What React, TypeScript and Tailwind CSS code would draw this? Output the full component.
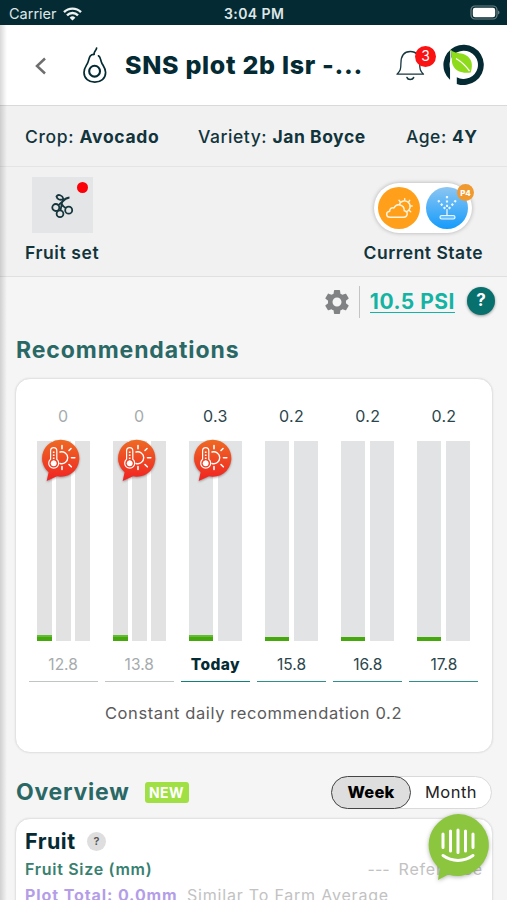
type Day = {
    value: string;
    label: string;
    past?: boolean;
    today?: boolean;
    alert?: boolean;
    bars: number;
};

const days: Day[] = [
    { value: "0", label: "12.8", past: true, alert: true, bars: 3 },
    { value: "0", label: "13.8", past: true, alert: true, bars: 3 },
    { value: "0.3", label: "Today", today: true, alert: true, bars: 2 },
    { value: "0.2", label: "15.8", bars: 2 },
    { value: "0.2", label: "16.8", bars: 2 },
    { value: "0.2", label: "17.8", bars: 2 },
];

const StatusBar = () => (
    <div className="relative flex h-[25px] shrink-0 items-center justify-between bg-[#042b33] pl-[9px] pr-[7px] text-[#dfe6e7]">
        <div className="flex items-center gap-[6px] pt-[3px]">
            <span className="text-[14.5px] leading-none">Carrier</span>
            <svg width="19" height="14" viewBox="0 0 19 14" fill="none" stroke="#eef2f2" strokeWidth="2.4">
                <path d="M1 5.2a12 12 0 0 1 17 0" />
                <path d="M4 8.3a7.8 7.8 0 0 1 11 0" />
                <path d="M9.5 13.6 6.6 10.7a4.1 4.1 0 0 1 5.8 0z" fill="#eef2f2" stroke="none" />
            </svg>
        </div>
        <span className="absolute left-[224px] top-[7px] whitespace-nowrap text-[14px] font-semibold leading-none tracking-[0.4px]">
            3:04 PM
        </span>
        <svg className="mt-[1px]" width="30" height="16" viewBox="0 0 30 16">
            <rect x="1" y="1" width="26" height="13" rx="4" fill="none" stroke="#6d8084" strokeWidth="1.2" />
            <rect x="2.8" y="2.8" width="22.4" height="9.4" rx="2.2" fill="#fff" />
            <path d="M28 5.5c2 .7 2 3.3 0 4z" fill="#6d8084" />
        </svg>
    </div>
);

const AvocadoIcon = () => (
    <svg width="26" height="38" viewBox="0 0 26 38" fill="none" stroke="#042b33" strokeWidth="1.7" strokeLinecap="round">
        <path d="M14.600 2C14.400 4.600 12.200 4.600 12 8.300" />
        <path d="M12 8.300C6.500 8.500 7.600 13.500 5.400 17.500C3.600 20.500 2 22.500 2 26.500C2 32.500 7 36.200 12.800 36.200C18.800 36.200 23.600 32.500 23.600 26.500C23.600 22.500 21.700 20.500 20 17.500C18.300 14.300 19 11.500 16.500 9.800" />
        <circle cx="12.6" cy="25.200" r="5.400" strokeWidth="2.100" />
    </svg>
);

const BellIcon = () => (
    <svg width="29" height="31" viewBox="0 0 29 31" fill="none" stroke="#17373e" strokeWidth="1.3" strokeLinecap="round" strokeLinejoin="round">
        <path d="M1 24.200h26.500c-3.400-3.200-3.800-5-3.800-10.700C23.700 6 20.600 1.500 14.300 1.500S4.900 6 4.900 13.500C4.900 19.200 4.400 21 1 24.200z" />
        <path d="M11 27.600c.8 2.600 5.600 2.600 6.600 0" strokeWidth="1.6" />
    </svg>
);

const BrandLogo = () => (
    <svg width="42" height="42" viewBox="0 0 42 42">
        <path
            fill="#042b33"
            d="M7.200 36A20.200 20.200 0 1 1 13.800 39.900V33.200A14.200 14.200 0 1 0 7.200 25z"
        />
        <path fill="#fff" d="M7.200 6.500h1.300V37H7.200z" />
        <path fill="#8edb1c" d="M7.400 5.800C11.500 9.800 17 8.300 22.500 11c6 3.200 8 9.300 5.200 17.500-8.500 1-15-1-17.700-7C7.800 16.800 9.800 12 7.400 5.800z" />
        <path d="M13 14.500c5 3 9.500 7 13.500 12.500" fill="none" stroke="#fff" strokeWidth="1.300" />
    </svg>
);

const Header = () => (
    <header className="flex h-[81px] shrink-0 items-center border-b border-[#d9d9d9] bg-white pl-[35px]">
        <svg className="mt-[2px]" width="12" height="18" viewBox="0 0 12 18" fill="none" stroke="#6e6e6e" strokeWidth="2.500">
            <path d="M10 1.500 2 9l8 7.500" />
        </svg>
        <div className="ml-[35px]">
            <AvocadoIcon />
        </div>
        <h1 className="ml-[17px] w-[271px] whitespace-nowrap text-[25px] font-extrabold leading-none tracking-[0.7px] text-[#042b33]">
            SNS plot 2b lsr -...
        </h1>
        <div className="relative">
            <BellIcon />
            <span className="absolute left-[19px] top-[-4px] flex h-[21px] w-[21px] items-center justify-center rounded-full bg-[#fb1212] text-[14px] leading-none text-white">
                3
            </span>
        </div>
        <div className="ml-[18px]">
            <BrandLogo />
        </div>
    </header>
);

const FruitSetIcon = () => (
    <svg width="23" height="25" viewBox="0 0 23 25" fill="none" stroke="#16363d" strokeWidth="1.800">
        <circle cx="4.800" cy="14.500" r="3.500" />
        <circle cx="9" cy="20.700" r="3.400" />
        <circle cx="17.700" cy="17.200" r="3.500" />
        <path d="M5.500 3.500C7 .8 11.500 2 12.400 6 9 7.600 6.300 6.600 5.500 3.500zM18.500 4.500c-3 .3-5 1.500-7 4.200-1 2-1.200 5-2 8.500M11 11.500c1 1.800 2.400 3 4 3.600M7.500 12.200 12 8" />
    </svg>
);

const WeatherIcon = () => (
    <svg width="42" height="42" viewBox="0 0 42 42" fill="none" stroke="#fff4dd" strokeWidth="1.400" strokeLinecap="round" strokeLinejoin="round">
        <circle cx="21" cy="21" r="21" fill="#ff9f1a" stroke="none" />
        <path d="M12 30.200h13.500c4.600 0 5-6 .7-6.500.4-6-7.600-8.200-10.200-2.700-2.500-.8-4.500.8-4.300 3.200-4.300.4-3.900 6 .3 6z" />
        <path d="M21.300 17.600a5.600 5.600 0 1 1 6.800 7.300" />
        <path d="M26.700 11.600v1.700M31.700 13.300l-1 1.600M34.200 19h-1.700M32.700 24.700l-1.400-1.200M21 13.300l1.200 1.500" />
    </svg>
);

const SprinklerIcon = () => (
    <svg width="42" height="42" viewBox="0 0 42 42" fill="none" stroke="#eaf6ff">
        <defs>
            <linearGradient id="water" x1="0" y1="0" x2="0" y2="1">
                <stop offset="0" stopColor="#8cc6f2" />
                <stop offset="1" stopColor="#149bfb" />
            </linearGradient>
        </defs>
        <circle cx="21" cy="21" r="21" fill="url(#water)" stroke="none" />
        <path d="M21 9v12.500M19.200 21.800l-8-9.500M22.800 21.800l8-9.500" strokeWidth="2.200" strokeDasharray="2.200 2.200" />
        <path d="M21 22v6.500" strokeWidth="1.300" />
        <rect x="14" y="28.500" width="15" height="3.500" rx="1.700" fill="#6cc0fa" strokeWidth="1.200" />
    </svg>
);

const PlotInfo = () => (
    <section className="shrink-0 bg-[#f1f1f2] text-[#12343b]">
        <div className="flex h-[61px] items-center whitespace-nowrap border-b border-[#e4e4e5] pl-[25px] pt-[2px] text-[17.5px] font-medium">
            <span className="w-[173px] tracking-[0.65px]">
                Crop: <b className="font-bold">Avocado</b>
            </span>
            <span className="w-[208px] tracking-[0.55px]">
                Variety: <b className="font-bold">Jan Boyce</b>
            </span>
            <span className="tracking-[0.5px]">
                Age: <b className="font-bold">4Y</b>
            </span>
        </div>
        <div className="flex h-[110px] justify-between border-b border-[#e0e0e1] pl-[25px] pr-[24px] pt-[10px]">
            <div className="flex flex-col">
                <div className="relative ml-[7px] flex h-[56px] w-[61px] items-center justify-center bg-[#e3e5e6]">
                    <FruitSetIcon />
                    <span className="absolute right-[5px] top-[5px] h-[11px] w-[11px] rounded-full bg-[#fb0007]" />
                </div>
                <span className="mt-[7px] text-[17.5px] font-semibold leading-[26px] tracking-[0.6px]">Fruit set</span>
            </div>
            <div className="flex flex-col items-end">
                <div className="relative mr-[11px] mt-[6px] flex h-[50px] w-[98px] items-center justify-between rounded-full bg-white px-[4px] shadow-[0_0_4px_rgba(0,0,0,0.28)]">
                    <WeatherIcon />
                    <SprinklerIcon />
                    <span className="absolute right-[-2px] top-[1px] flex h-[17px] w-[17px] items-center justify-center rounded-full bg-[#f0992f] text-[8px] font-extrabold text-white">
                        P4
                    </span>
                </div>
                <span className="mt-[7px] text-[17.5px] font-semibold leading-[26px] tracking-[0.5px]">Current State</span>
            </div>
        </div>
    </section>
);

const PressureRow = () => (
    <div className="flex h-[48px] shrink-0 items-center justify-end pr-[12px]">
        <svg className="mt-[2px]" width="30" height="30" viewBox="0 0 24 24" fill="#808284">
            <path d="M19.140 12.940c.04-.3.060-.61.060-.94 0-.32-.020-.64-.070-.94l2.030-1.580c.18-.14.230-.41.120-.61l-1.920-3.320c-.12-.22-.37-.29-.59-.22l-2.390.96c-.5-.38-1.030-.7-1.620-.94l-.36-2.540c-.04-.24-.24-.41-.48-.41h-3.840c-.24 0-.43.17-.47.41l-.36 2.540c-.59.24-1.130.57-1.620.94l-2.390-.96c-.22-.08-.47 0-.59.22L2.740 8.870c-.12.21-.08.47.12.61l2.030 1.580c-.05.3-.09.63-.09.94s.02.64.07.94l-2.030 1.580c-.18.14-.23.41-.12.61l1.920 3.320c.12.22.37.29.59.22l2.390-.96c.5.38 1.030.7 1.620.94l.36 2.540c.05.24.24.41.48.41h3.840c.24 0 .44-.17.47-.41l.36-2.540c.59-.24 1.130-.56 1.620-.94l2.390.96c.22.08.47 0 .59-.22l1.920-3.320c.12-.22.07-.47-.12-.61l-2.010-1.580zM12 15.600c-1.980 0-3.600-1.620-3.600-3.600s1.620-3.600 3.600-3.600 3.600 1.620 3.600 3.600-1.620 3.600-3.600 3.600z" />
        </svg>
        <span className="ml-[7px] mt-[2px] h-[32px] w-px bg-[#c4c4c4]" />
        <a className="ml-[10px] mt-[2px] border-b-[1.500px] border-[#14b3a3] text-[21px] font-bold leading-[20px] tracking-[0.5px] text-[#14b3a3]">
            10.5 PSI
        </a>
        <span className="ml-[12px] flex h-[28px] w-[28px] items-center justify-center rounded-full bg-[#08706d] text-[17px] font-bold text-white shadow-[0_1px_3px_rgba(0,0,0,0.4)]">
            ?
        </span>
    </div>
);

const HeatAlert = () => (
    <svg className="absolute left-[5.500px] top-[-2px] overflow-visible" width="38" height="44" viewBox="0 0 38 44" fill="none" stroke="#fff" strokeLinecap="round">
        <defs>
            <linearGradient id="heat" x1="0" y1="0" x2="0" y2="1">
                <stop offset="0" stopColor="#ee6a24" />
                <stop offset="1" stopColor="#f02222" />
            </linearGradient>
        </defs>
        <path
            className="drop-shadow-[0_1px_1px_rgba(0,0,0,0.35)]"
            d="M18.800 .700a18.500 18.500 0 1 1-3.800 36.600L4.700 42 6.600 33.300A18.500 18.500 0 0 1 18.800 .700z"
            fill="url(#heat)"
            stroke="none"
        />
        <path d="M8.600 20.300V11.800a3.100 3.100 0 0 1 6.200 0v8.500a5 5 0 1 1-6.200 0z" strokeWidth="1.200" />
        <circle cx="11.700" cy="24.300" r="2.900" fill="#fff" stroke="none" />
        <path d="M11.700 12.500v11" strokeWidth="1.700" strokeDasharray="1.500 1.500" strokeLinecap="butt" />
        <path d="M18 13a6 6 0 1 1 0 11.500" strokeWidth="1.400" />
        <path d="M20 6.500v3.200M20 27.500v3M29.500 18.700h3.300M27 11.500l2-2M27 25.500l2.300 2.300" strokeWidth="1.600" />
    </svg>
);

const DayColumn = ({ day }: { day: Day }) => (
    <div className="flex flex-col items-center">
        <span className={`h-[25px] text-[16px] leading-[25px] tracking-[0.3px] ${day.past ? "text-[#a6abad]" : "text-[#2a464c]"}`}>
            {day.value}
        </span>
        <div className={`relative mt-[12px] flex h-[200px] w-[53px] ${day.past ? "gap-[4px]" : "gap-[5px]"}`}>
            {Array.from({ length: day.bars }, (_, i) => (
                <div key={i} className={`flex flex-1 flex-col justify-end ${day.past ? "bg-[#e2e2e2]" : "bg-[#e1e3e4]"}`}>
                    {i === 0 && (
                        <>
                            {day.alert && <div className="h-[2px] bg-[#62bd35]" />}
                            <div className="h-[4px] bg-[#45a80d]" />
                        </>
                    )}
                </div>
            ))}
            {day.alert && <HeatAlert />}
        </div>
        <span
            className={`mt-[12px] h-[28px] text-[15.5px] leading-[23px] ${
                day.today
                    ? "font-extrabold tracking-[0.4px] text-[#042b33]"
                    : day.past
                      ? "text-[#a6abad]"
                      : "text-[#2a464c]"
            }`}
        >
            {day.label}
        </span>
        <div className={`h-px w-full ${day.past ? "bg-[#bfc5c6]" : day.today ? "bg-[#0f807b]" : "bg-[#2f8f8c]"}`} />
    </div>
);

const Recommendations = () => (
    <section className="shrink-0 pl-[15px] pr-[14px]">
        <h2 className="h-[53px] pl-[1px] pt-[8px] text-[23px] font-bold leading-[34px] tracking-[0.9px] text-[#2a6866]">
            Recommendations
        </h2>
        <div className="flex h-[375px] flex-col rounded-[15px] border border-[#e3e3e3] bg-white pl-[12.500px] pr-[13.500px] pt-[25px] shadow-[0_0_2px_rgba(0,0,0,0.1)]">
            <div className="grid grid-cols-6 gap-[7px]">
                {days.map((day) => (
                    <DayColumn key={day.label} day={day} />
                ))}
            </div>
            <p className="mt-[19px] whitespace-nowrap text-center text-[16.5px] tracking-[0.6px] text-[#5b5b5b]">
                Constant daily recommendation 0.2
            </p>
        </div>
    </section>
);

const Overview = () => (
    <section className="flex shrink-0 flex-col pl-[15px] pr-[14px]">
        <div className="flex h-[65px] items-center pt-[14px]">
            <h2 className="w-[129.500px] pl-[1px] text-[23px] font-bold tracking-[0.75px] text-[#2a6866]">Overview</h2>
            <span className="flex h-[21px] w-[44px] items-center justify-center rounded-[3px] bg-[#a0e045] text-[14px] font-bold tracking-[0.4px] text-white">
                NEW
            </span>
            <div className="ml-auto mr-px flex h-[33px] w-[161px] rounded-full border border-[#dadada] bg-white text-[16.5px] text-[#222]">
                <span className="-my-px -ml-px flex w-[80px] items-center justify-center rounded-full border-[1.5px] border-[#444] bg-[#dedede] font-extrabold tracking-[0.2px] text-black">
                    Week
                </span>
                <span className="flex flex-1 items-center justify-center tracking-[0.5px]">Month</span>
            </div>
        </div>
        <div className="h-[160px] whitespace-nowrap rounded-[15px] border border-[#e3e3e3] bg-white px-[9px] pt-[8px] shadow-[0_0_2px_rgba(0,0,0,0.1)]">
            <div className="flex h-[28px] items-center">
                <h3 className="w-[62px] text-[21.5px] font-bold tracking-[0.5px] text-[#042b33]">Fruit</h3>
                <span className="flex h-[19px] w-[19px] items-center justify-center rounded-full bg-[#dedede] text-[11px] font-semibold text-[#555]">
                    ?
                </span>
            </div>
            <div className="flex h-[27px] items-center justify-between text-[16px]">
                <span className="font-semibold tracking-[0.7px] text-[#38806f]">Fruit Size (mm)</span>
                <span className="flex items-center tracking-[0.8px] text-[#c2c2c2]">
                    <span className="mr-[9px] tracking-[0px]">---</span>
                    Reference
                </span>
            </div>
            <div className="flex h-[26px] items-center text-[16px]">
                <span className="w-[162px] font-bold tracking-[0.9px] text-[#b49ee8]">Plot Total: 0.0mm</span>
                <span className="tracking-[0.8px] text-[#c2c2c2]">Similar To Farm Average</span>
            </div>
        </div>
    </section>
);

const ChatButton = () => (
    <button className="absolute left-[424px] top-[811px]" aria-label="Chat">
        <svg className="drop-shadow-[0_1px_2px_rgba(0,0,0,0.3)]" width="68" height="72" viewBox="0 0 68 72" fill="none" stroke="#fff" strokeLinecap="round">
            <path d="M34.300 3a31 31 0 1 1-10 60.500L14 69l1.500-11.500A31 31 0 0 1 34.300 3z" fill="#8cc63e" stroke="none" />
            <path d="M19 23v13.500M26.500 20v20M34 19v22.500M41.500 20v20M49 23v13.500" strokeWidth="3" />
            <path d="M19 44.500c9 6.500 21 6.500 30 0" strokeWidth="3" />
        </svg>
    </button>
);

const App = () => {
    return (
        <div className="relative flex h-[900px] w-full flex-col overflow-hidden bg-[#f5f5f5] font-['Inter','Liberation_Sans',sans-serif]">
            <StatusBar />
            <Header />
            <PlotInfo />
            <PressureRow />
            <Recommendations />
            <Overview />
            {/* Shade cast along the edge by the previous screen */}
            <div className="pointer-events-none absolute bottom-0 left-0 top-[25px] w-[7px] bg-gradient-to-r from-black/15 to-transparent" />
            <ChatButton />
        </div>
    );
};

export default App;
